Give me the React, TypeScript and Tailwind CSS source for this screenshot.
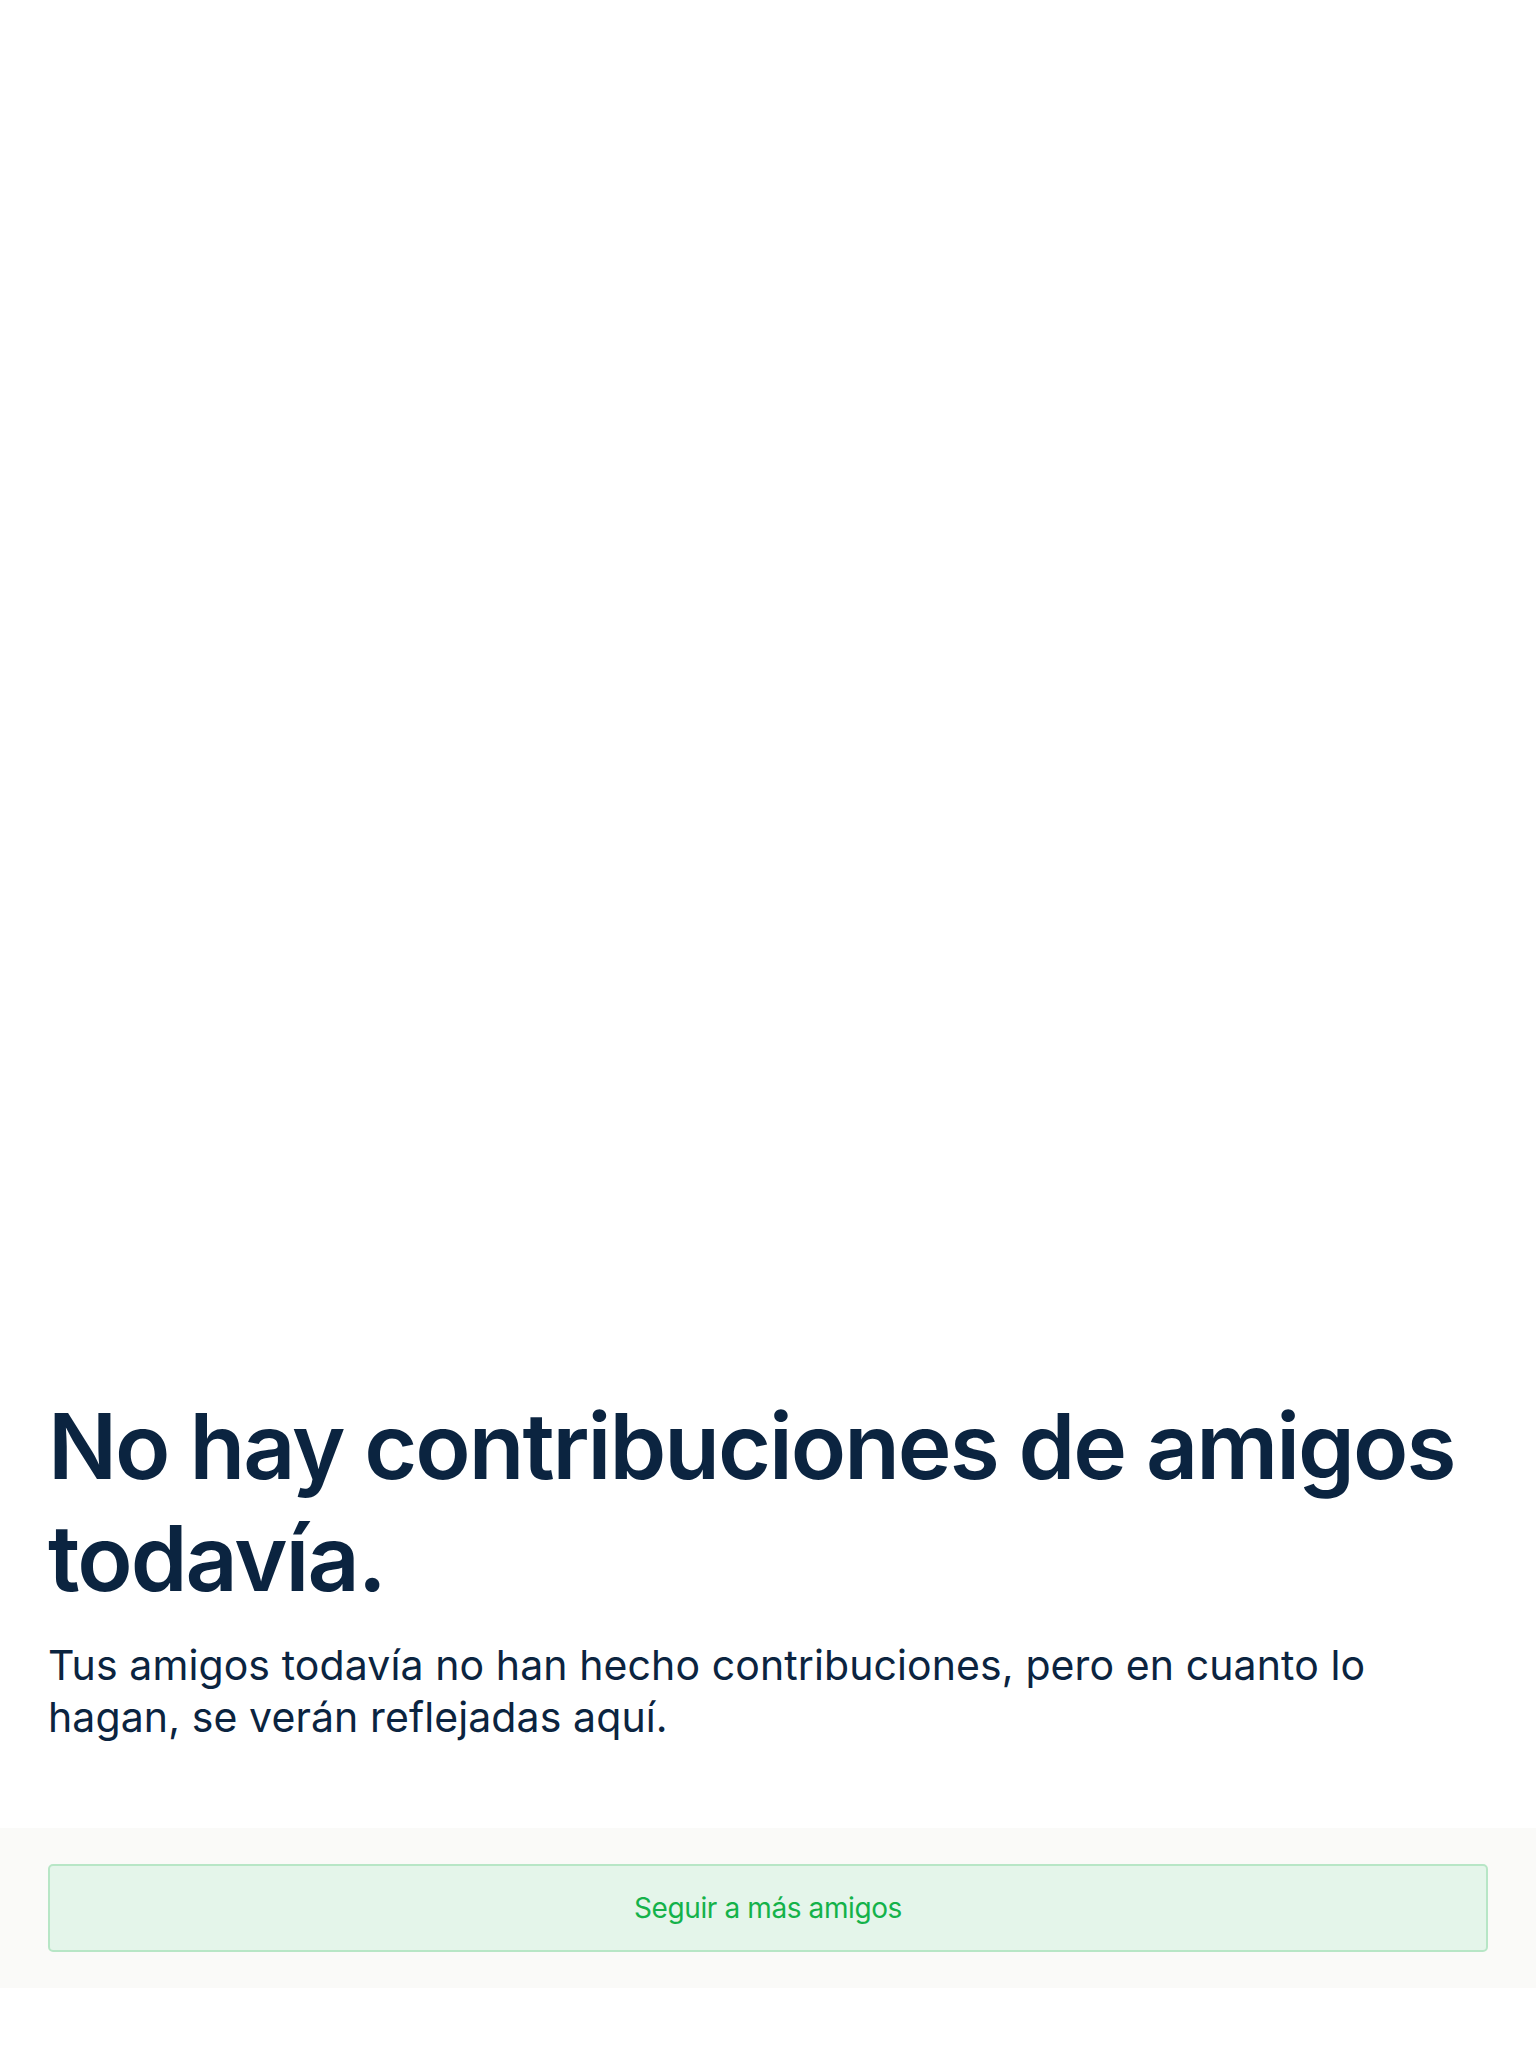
import React from "react";

export default function App() {
  return (
    <div
      className="h-[2048px] w-full flex flex-col bg-white"
      style={{ fontFamily: "Inter, 'Noto Sans', sans-serif" }}
    >
      <div className="flex-1" />
      <div className="px-12">
        <h1 className="text-[91px] leading-[112px] font-semibold text-[#0b2440] tracking-[-2px]">
          No hay contribuciones de amigos todavía.
        </h1>
        <p className="mt-[25px] text-[41px] leading-[52px] font-normal text-[#0b2440] tracking-[0.1px]">
          Tus amigos todavía no han hecho contribuciones, pero en cuanto lo hagan, se verán reflejadas aquí.
        </p>
      </div>
      <div className="mt-[85px] bg-[#fafaf8] px-12 py-9">
        <button className="w-full h-[88px] rounded-[5px] border-2 border-[#b7e6c6] bg-[#e4f5ea] text-[28px] tracking-[-0.4px] text-[#14b24a] flex items-center justify-center">
          Seguir a más amigos
        </button>
      </div>
      <div className="h-[60px]" />
    </div>
  );
}
